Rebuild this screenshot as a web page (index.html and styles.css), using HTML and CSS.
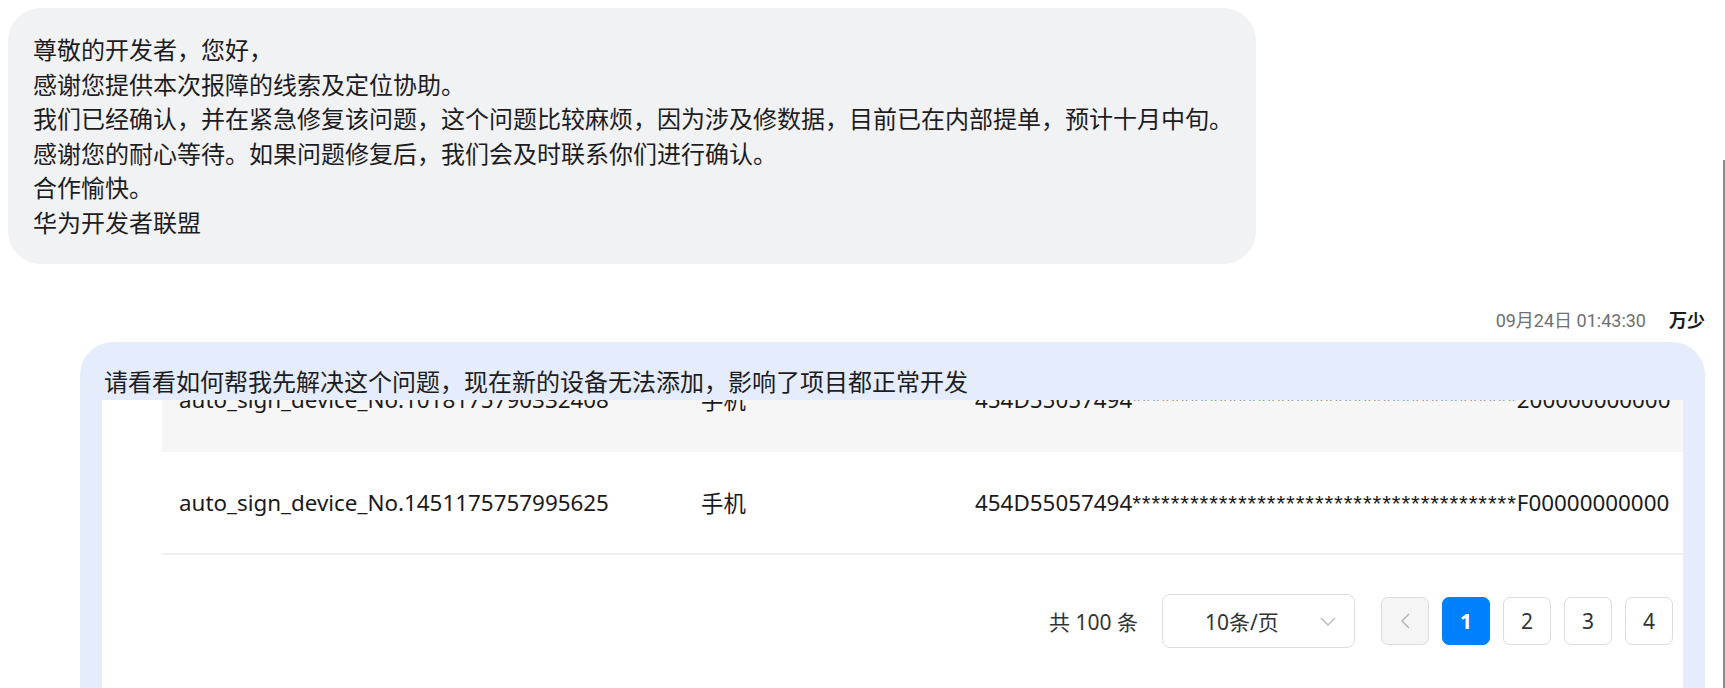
FILE: index.html
```html
<!DOCTYPE html>
<html lang="zh-CN">
<head>
<meta charset="utf-8">
<title>Chat</title>
<link rel="stylesheet" href="styles.css">
</head>
<body>
<div class="page">
  <div class="row-in">
    <div class="bubble-in">
      <p class="line">尊敬的开发者，您好，</p>
      <p class="line">感谢您提供本次报障的线索及定位协助。</p>
      <p class="line">我们已经确认，并在紧急修复该问题，这个问题比较麻烦，因为涉及修数据，目前已在内部提单，预计十月中旬。</p>
      <p class="line">感谢您的耐心等待。如果问题修复后，我们会及时联系你们进行确认。</p>
      <p class="line">合作愉快。</p>
      <p class="line">华为开发者联盟</p>
    </div>
  </div>
  <div class="meta">
    <span class="time">09月24日 01:43:30</span>
    <span class="name">万少</span>
  </div>
  <div class="bubble-out">
    <p class="out-text">请看看如何帮我先解决这个问题，现在新的设备无法添加，影响了项目都正常开发</p>
    <div class="shot">
      <div class="table">
        <div class="tr stripe">
          <div class="td">auto_sign_device_No.1018175790332408</div>
          <div class="td">手机</div>
          <div class="td">454D55057494<span class="stars">****************************************</span>200000000000</div>
        </div>
        <div class="tr last">
          <div class="td">auto_sign_device_No.1451175757995625</div>
          <div class="td">手机</div>
          <div class="td">454D55057494<span class="stars">****************************************</span>F00000000000</div>
        </div>
      </div>
      <div class="pager">
        <span class="total">共 100 条</span>
        <div class="select">
          <span class="select-text">10条/页</span>
          <svg class="chev-down" width="16" height="9" viewBox="0 0 16 9"><polyline points="1,1 8,8 15,1" fill="none" stroke="#b8b8bd" stroke-width="1.4"/></svg>
        </div>
        <div class="pages">
          <div class="pg prev"><svg width="9" height="16" viewBox="0 0 9 16"><polyline points="8,1 1,8 8,15" fill="none" stroke="#b0b0b0" stroke-width="1.4"/></svg></div>
          <div class="pg active">1</div>
          <div class="pg">2</div>
          <div class="pg">3</div>
          <div class="pg">4</div>
        </div>
      </div>
    </div>
  </div>
  <div class="edge-line"></div>
</div>
</body>
</html>
```
FILE: styles.css
```css
html, body {
  margin: 0;
  padding: 0;
  background: #ffffff;
  overflow: hidden;
}
.page {
  position: relative;
  width: 1725px;
  height: 688px;
  overflow: hidden;
  font-family: "Noto Sans", "Noto Sans CJK SC", sans-serif;
  color: #1d1d1f;
}
.row-in {
  padding: 8px 0 0 8px;
  display: flex;
}
.bubble-in {
  background: #f1f2f4;
  border-radius: 33px;
  padding: 24px 23px 25px 25px;
  font-family: "Noto Sans CJK SC", sans-serif;
  font-size: 24px;
  line-height: 34.5px;
}
.line {
  margin: 0;
  white-space: nowrap;
}
.meta {
  display: flex;
  justify-content: flex-end;
  align-items: center;
  gap: 23px;
  margin-top: 42px;
  padding-right: 20px;
  height: 26px;
}
.time {
  font-family: Roboto, "Noto Sans CJK SC", sans-serif;
  font-size: 18px;
  color: #707070;
}
.name {
  font-family: "Noto Sans CJK SC", sans-serif;
  font-size: 18px;
  font-weight: 700;
  color: #1a1a1a;
}
.bubble-out {
  margin: 10px 20px 0 80px;
  background: #e5ecfb;
  border-radius: 33px;
  padding: 22px 22px 22px 22px;
}
.out-text {
  margin: 0 0 2px 2px;
  font-family: "Noto Sans CJK SC", sans-serif;
  font-size: 24px;
  line-height: 34px;
  white-space: nowrap;
}
.shot {
  background: #ffffff;
  overflow: hidden;
  padding-left: 60px;
}
.table {
  margin-top: -51px;
  font-family: "Noto Sans", "Noto Sans CJK SC", sans-serif;
  font-size: 22.4px;
  color: #1a1a1a;
}
.tr {
  display: grid;
  grid-template-columns: 522px 274px 1fr;
  align-items: center;
  height: 103px;
  border-bottom: 2px solid #efefef;
  box-sizing: border-box;
}
.stripe {
  background: #f6f6f6;
  border-bottom-color: #f6f6f6;
}
.td {
  padding-left: 17px;
  white-space: nowrap;
}
.stars {
  font-family: "Liberation Sans", sans-serif;
  letter-spacing: 0.9px;
}
.pager {
  display: flex;
  justify-content: flex-end;
  align-items: center;
  padding: 39px 10px 48px 0;
  font-family: "Noto Sans", "Noto Sans CJK SC", sans-serif;
  color: #333333;
}
.total {
  font-size: 21px;
  margin-right: 24px;
}
.select {
  box-sizing: border-box;
  width: 193px;
  height: 54px;
  border: 1.5px solid #dcdee3;
  border-radius: 8px;
  display: flex;
  align-items: center;
  justify-content: space-between;
  padding: 0 18px 0 42px;
  font-size: 21px;
  margin-right: 26px;
}
.pages {
  display: flex;
  gap: 13px;
}
.pg {
  box-sizing: border-box;
  width: 48px;
  height: 48px;
  border: 1.5px solid #dcdcdc;
  border-radius: 7px;
  display: flex;
  align-items: center;
  justify-content: center;
  font-size: 21px;
  color: #333333;
  background: #ffffff;
}
.pg.prev {
  background: #f5f5f5;
}
.pg.active {
  background: #0180fe;
  border-color: #0180fe;
  color: #ffffff;
  font-weight: 700;
}
.edge-line {
  position: absolute;
  right: 0;
  top: 160px;
  bottom: 0;
  width: 2px;
  background: #8c8c8c;
}
```
